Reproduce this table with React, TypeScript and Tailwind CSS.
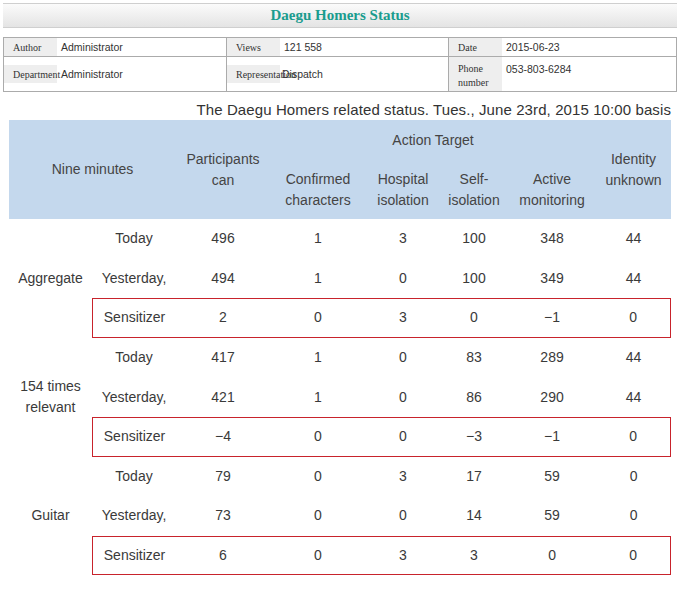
import React from "react";

const groups = [
  {
    label: ["Aggregate"],
    rows: [
      ["Today", "496", "1", "3", "100", "348", "44"],
      ["Yesterday,", "494", "1", "0", "100", "349", "44"],
      ["Sensitizer", "2", "0", "3", "0", "−1", "0"],
    ],
  },
  {
    label: ["154 times", "relevant"],
    rows: [
      ["Today", "417", "1", "0", "83", "289", "44"],
      ["Yesterday,", "421", "1", "0", "86", "290", "44"],
      ["Sensitizer", "−4", "0", "0", "−3", "−1", "0"],
    ],
  },
  {
    label: ["Guitar"],
    rows: [
      ["Today", "79", "0", "3", "17", "59", "0"],
      ["Yesterday,", "73", "0", "0", "14", "59", "0"],
      ["Sensitizer", "6", "0", "3", "3", "0", "0"],
    ],
  },
];

const colWidths = [83, 84, 94, 96, 74, 68, 88, 75];

function Label({ children, tall }: { children: React.ReactNode; tall?: boolean }) {
  return (
    <div
      className={
        "w-[53px] shrink-0 bg-[#eeeeee] pl-[9px] whitespace-nowrap text-[10px] text-[#333] " +
        (tall ? "self-stretch pt-[5px] leading-[14px] whitespace-normal" : "flex h-[18px] items-center")
      }
      style={{ fontFamily: '"Liberation Serif", serif' }}
    >
      {children}
    </div>
  );
}

function Value({ children, top }: { children: React.ReactNode; top?: boolean }) {
  return (
    <div className={"pl-[4px] text-[10.5px] text-[#333] " + (top ? "self-start pt-[5px] leading-[14px]" : "")}>
      {children}
    </div>
  );
}

export default function App() {
  return (
    <div
      className="w-[691px] h-[604px] bg-white overflow-hidden"
      style={{ fontFamily: '"Liberation Sans", Arial, sans-serif' }}
    >
      {/* Title bar */}
      <div className="mx-[3px] mt-[3px] w-[674px] h-[25px] border-t border-b border-[#cfcfcf] bg-gradient-to-b from-[#fbfbfb] to-[#e4e4e4] flex items-center justify-center">
        <span
          className="text-[15px] font-bold text-[#1a9c8e]"
          style={{ fontFamily: '"Liberation Serif", serif' }}
        >
          Daegu Homers Status
        </span>
      </div>

      {/* Info table */}
      <div className="mx-[3px] mt-[9px] w-[674px] border-t border-l border-r border-b border-[#ababab] border-b-dotted">
        <div className="flex h-[19px] border-b border-[#ababab]">
          <div className="flex w-[223px] items-stretch border-r border-[#ababab]">
            <Label>Author</Label>
            <div className="flex items-center pt-[1px]">
              <Value>Administrator</Value>
            </div>
          </div>
          <div className="flex w-[222px] items-stretch border-r border-[#ababab]">
            <Label>Views</Label>
            <div className="flex items-center pt-[1px]">
              <Value>121 558</Value>
            </div>
          </div>
          <div className="flex flex-1 items-stretch">
            <Label>Date</Label>
            <div className="flex items-center pt-[1px]">
              <Value>2015-06-23</Value>
            </div>
          </div>
        </div>
        <div className="flex h-[34px]">
          <div className="flex w-[223px] items-center border-r border-[#ababab]">
            <Label>Department</Label>
            <div className="pt-[2px]">
              <Value>Administrator</Value>
            </div>
          </div>
          <div className="flex w-[222px] items-center border-r border-[#ababab]">
            <Label>Representation</Label>
            <div className="-ml-[2px] pt-[2px]">
              <Value>Dispatch</Value>
            </div>
          </div>
          <div className="flex flex-1 items-stretch">
            <Label tall>
              Phone
              <br />
              number
            </Label>
            <Value top>053-803-6284</Value>
          </div>
        </div>
      </div>

      {/* Subtitle */}
      <div className="mt-[9px] w-[671px] text-right text-[15px] leading-[18px] tracking-[0.1px] text-[#333]">
        The Daegu Homers related status. Tues., June 23rd, 2015 10:00 basis
      </div>

      {/* Main table */}
      <table
        className="ml-[9px] mt-[1px] w-[662px] table-fixed border-separate text-[14px] text-[#3a3a3a]"
        style={{ borderSpacing: 0 }}
      >
        <colgroup>
          {colWidths.map((w, i) => (
            <col key={i} style={{ width: w }} />
          ))}
        </colgroup>
        <thead className="bg-[#c4d8ed] text-[#444]">
          <tr className="h-[40px]">
            <th colSpan={2} rowSpan={2} className="font-normal leading-[20.5px] align-middle">
              Nine minutes
            </th>
            <th rowSpan={2} className="font-normal leading-[20.5px] align-middle">
              Participants
              <br />
              can
            </th>
            <th colSpan={4} className="font-normal leading-[20.5px] align-middle">
              Action Target
            </th>
            <th rowSpan={2} className="font-normal leading-[20.5px] align-middle">
              Identity
              <br />
              unknown
            </th>
          </tr>
          <tr className="h-[59px]">
            <th className="font-normal leading-[20.5px] align-middle">
              Confirmed
              <br />
              characters
            </th>
            <th className="font-normal leading-[20.5px] align-middle">
              Hospital
              <br />
              isolation
            </th>
            <th className="font-normal leading-[20.5px] align-middle">
              Self-
              <br />
              isolation
            </th>
            <th className="font-normal leading-[20.5px] align-middle">
              Active
              <br />
              monitoring
            </th>
          </tr>
        </thead>
        <tbody>
          {groups.map((g, gi) =>
            g.rows.map((r, ri) => {
              const boxed = ri === 2;
              return (
                <tr key={gi + "-" + ri} className="h-[39.6px]">
                  {ri === 0 && (
                    <td rowSpan={3} className="text-center align-middle leading-[21px]">
                      {g.label.map((l, li) => (
                        <div key={li}>{l}</div>
                      ))}
                    </td>
                  )}
                  {r.map((c, ci) => (
                    <td
                      key={ci}
                      className={
                        "text-center align-middle p-0 " +
                        (boxed
                          ? "border-t border-b border-[#c8232c] " +
                            (ci === 0 ? "border-l " : "") +
                            (ci === r.length - 1 ? "border-r " : "")
                          : "")
                      }
                    >
                      {c}
                    </td>
                  ))}
                </tr>
              );
            })
          )}
        </tbody>
      </table>
    </div>
  );
}
